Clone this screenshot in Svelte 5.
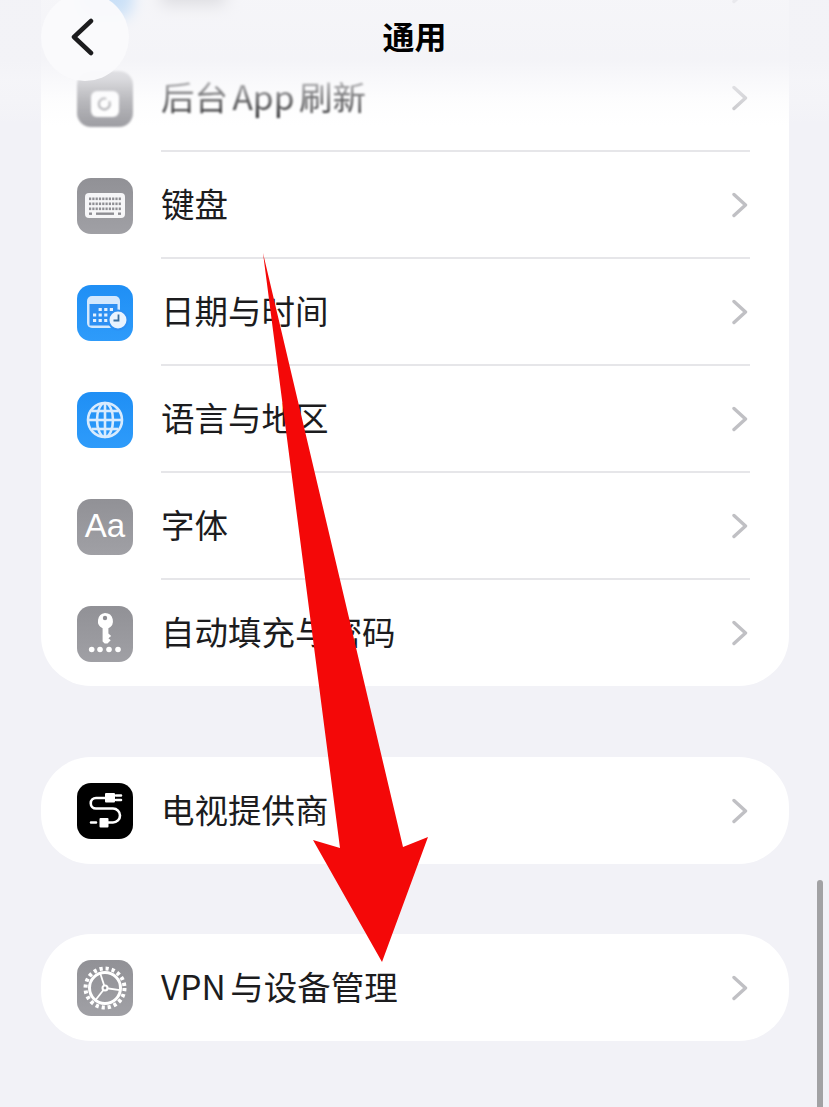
<script>
  const main_rows = [
    { icon: 'hidden', label: '', smear: true },
    { icon: 'refresh', label: '后台 App 刷新' },
    { icon: 'keyboard', label: '键盘' },
    { icon: 'calendar', label: '日期与时间' },
    { icon: 'globe', label: '语言与地区' },
    { icon: 'font', label: '字体' },
    { icon: 'key', label: '自动填充与密码' }
  ]
  const blue_icons = ['calendar', 'globe', 'hidden']
  const tones = { tv: 'dark' }
  const tone = (name) => (blue_icons.includes(name) ? 'blue' : tones[name] ?? 'gray')
  const keyboard_dots = [0, 1, 2, 3, 4, 5, 6, 7, 8, 9]
  const calendar_dots = [0, 1, 2, 3]
  const globe_lats = [-9, 0, 9]
  const gear_spokes = [-108, 8, 128]
  const key_dots = [14.7, 23, 32, 41]
</script>

{#snippet glyph(name)}
  <svg viewBox="0 0 56 56" class="glyph">
    {#if name === 'refresh'}
      <rect x="14" y="20" width="28" height="26" rx="6" fill="#fff" />
      <path d="M32.500 31a5.500 5.500 0 1 1-4-3.500" fill="none" stroke="#a2a2a6" stroke-width="2.200" stroke-linecap="round" />
    {:else if name === 'keyboard'}
      <rect x="8" y="15" width="40" height="25" rx="4" fill="#f6f6f8" />
      {#each [19.5, 24.5, 29.5] as y}
        {#each keyboard_dots as i}
          <rect x={12 + i * 3.3} {y} width="2.200" height="2.600" fill="#8e8e93" />
        {/each}
      {/each}
      <rect x="19" y="34.500" width="18" height="2.400" fill="#8e8e93" />
      <rect x="12" y="34.500" width="3" height="2.400" fill="#8e8e93" />
      <rect x="41" y="34.500" width="3" height="2.400" fill="#8e8e93" />
    {:else if name === 'calendar'}
      <rect x="10" y="11" width="33" height="32" rx="5" fill="#d3e8fd" />
      <rect x="12.500" y="19" width="28" height="21.500" fill="#2d8ff2" />
      {#each [23, 28.500, 34] as y, r}
        {#each calendar_dots as i}
          {#if !(r === 0 && i === 0)}
            <rect x={16 + i * 5.6} {y} width="3.200" height="3" fill="#e4f1fe" />
          {/if}
        {/each}
      {/each}
      <circle cx="41" cy="35" r="9.500" fill="#e9f3fe" stroke="#2d8ff2" stroke-width="2" />
      <path d="M41.500 29.500v6h-5" fill="none" stroke="#3a6f9f" stroke-width="1.800" />
    {:else if name === 'globe'}
      <g fill="none" stroke="#d8ebfe" stroke-width="2.600">
        <circle cx="28" cy="28" r="17" />
        <ellipse cx="28" cy="28" rx="8" ry="17" />
        <path d="M28 11v34" />
        {#each globe_lats as d}
          <path d="M{12 + Math.abs(d) / 3} {28 + d}H{44 - Math.abs(d) / 3}" />
        {/each}
      </g>
    {:else if name === 'font'}
      <text x="28" y="38" text-anchor="middle" class="aa">Aa</text>
    {:else if name === 'key'}
      <path d="M28 7a8 8 0 0 1 3.400 15.200v5.300l2.800 2.500-2.800 2.300 2.300 2-3.200 3.200h-2.800l-2.100-2.100V22.200A8 8 0 0 1 28 7z" fill="#fff" />
      <circle cx="28" cy="12" r="2.200" fill="#8e8e93" />
      {#each key_dots as cx}
        <circle {cx} cy="43.500" r="2.800" fill="#fff" />
      {/each}
    {:else if name === 'tv'}
      <g fill="none" stroke="#fff" stroke-width="2.600" stroke-linecap="round">
        <path d="M28 15H19a5.200 5.200 0 0 0 0 10.500H36a7 7 0 0 1 0 14H31" />
        <path d="M39 12.500h5M39 17h5M14 39.500h5" />
      </g>
      <rect x="28" y="10" width="10" height="9.500" rx="1" fill="#fff" />
      <rect x="22.500" y="35" width="9" height="9.500" rx="1" fill="#fff" />
    {:else if name === 'gear'}
      <g fill="none" stroke="#fff">
        <circle cx="28" cy="28" r="19.500" stroke-width="4" stroke-dasharray="3.200 2.926" />
        <circle cx="28" cy="28" r="15.500" stroke-width="3" />
        {#each gear_spokes as a}
          <path d="M28 28L{28 + 15 * Math.cos((a * Math.PI) / 180)} {28 + 15 * Math.sin((a * Math.PI) / 180)}" stroke-width="1.800" />
        {/each}
      </g>
      <circle cx="28" cy="28" r="3.500" fill="#fff" />
      <circle cx="28" cy="28" r="1.400" fill="#8e8e93" />
    {/if}
  </svg>
{/snippet}

{#snippet row(item)}
  <div class="row">
    <span class="icon {tone(item.icon)}">{@render glyph(item.icon)}</span>
    <div class="row-body">
      {#if item.smear}
        <span class="smear"></span>
      {:else}
        <span class="label">{item.label}</span>
      {/if}
      <svg class="chevron" viewBox="0 0 16 26">
        <path d="M2 2.500L13.500 13 2 23.500" />
      </svg>
    </div>
  </div>
{/snippet}

<div class="page">
  <section class="card first">
    {#each main_rows as item}
      {@render row(item)}
    {/each}
  </section>
  <section class="card second">
    {@render row({ icon: 'tv', label: '电视提供商' })}
  </section>
  <section class="card third">
    {@render row({ icon: 'gear', label: 'VPN 与设备管理' })}
  </section>

  <header class="nav">
    <div class="nav-tint"></div>
    <button class="back" aria-label="返回">
      <svg viewBox="0 0 24 38" width="24" height="38">
        <path d="M21 3L4 19l17 16" />
      </svg>
    </button>
    <h1>通用</h1>
  </header>

  <div class="scrollbar"></div>

  <svg class="arrow" viewBox="0 0 829 1107">
    <polygon points="263,253 403,847 428,837 382,962 313,840 340,848" />
  </svg>
</div>

<style>
  :global(body) {
    margin: 0;
    background: #f2f2f7;
  }
  .page {
    position: relative;
    width: 829px;
    height: 1107px;
    overflow: hidden;
    background: #f2f2f7;
    padding: 0 40px 0 41px;
    box-sizing: border-box;
    font-family: 'Noto Sans CJK SC', 'Noto Sans', sans-serif;
    color: #1c1c1e;
  }
  .card {
    background: #fff;
    border-radius: 50px;
    overflow: hidden;
  }
  .card.first {
    margin-top: -63px;
  }
  .card.second {
    margin-top: 71px;
  }
  .card.third {
    margin-top: 70px;
  }
  .row {
    display: flex;
    align-items: center;
    height: 107px;
    padding: 0 39px 0 36px;
  }
  /* rows sliding under the nav bar go soft */
  .first .row:nth-child(1) .icon {
    filter: blur(7px);
  }
  .first .row:nth-child(2) .icon,
  .first .row:nth-child(2) .label {
    filter: blur(0.8px);
  }
  .first .row:nth-child(2) .row-body {
    border-top-color: transparent;
  }
  .icon {
    flex: none;
    width: 56px;
    height: 56px;
    border-radius: 14px;
    margin: 1px 28px 0 0;
  }
  .first .icon {
    margin-top: 3px;
  }
  .icon.gray {
    background: linear-gradient(#919196, #a0a0a5);
  }
  .icon.blue {
    background: linear-gradient(#1f8ff5, #2e9bfa);
  }
  .icon.dark {
    background: #000;
  }
  .glyph {
    display: block;
    width: 56px;
    height: 56px;
  }
  .aa {
    fill: #fff;
    font: 400 33px 'Liberation Sans', sans-serif;
  }
  .row-body {
    flex: 1;
    align-self: stretch;
    display: flex;
    align-items: center;
    justify-content: space-between;
    padding: 0 2px 2px 0;
    border-top: 2px solid #e6e6e9;
    margin: -1px 0;
  }
  .row:first-child .row-body {
    border-top-color: transparent;
  }
  .label {
    font-size: 33.500px;
    line-height: 1;
    word-spacing: -3px;
    margin-bottom: 3px;
  }
  .smear {
    width: 64px;
    height: 30px;
    background: #8a8a8e;
    filter: blur(8px);
  }
  .chevron {
    width: 16px;
    height: 26px;
    fill: none;
    stroke: #c0c0c4;
    stroke-width: 3.400;
    stroke-linecap: round;
    stroke-linejoin: round;
  }
  .nav {
    position: absolute;
    inset: 0 0 auto 0;
    height: 130px;
  }
  .nav-tint {
    position: absolute;
    inset: 0;
    background: linear-gradient(
      rgba(243, 243, 247, 0.8) 0,
      rgba(243, 243, 247, 0.92) 60px,
      rgba(246, 246, 249, 0.7) 80px,
      rgba(248, 248, 250, 0.35) 100px,
      rgba(255, 255, 255, 0) 125px
    );
  }
  .back {
    position: absolute;
    left: 41px;
    top: -7px;
    width: 88px;
    height: 88px;
    padding: 0;
    border: 0;
    border-radius: 50%;
    background: rgba(250, 250, 252, 0.96);
    display: flex;
    align-items: center;
    justify-content: center;
  }
  .back svg {
    margin-right: 7px;
    fill: none;
    stroke: #1c1c1e;
    stroke-width: 4.500;
    stroke-linecap: round;
    stroke-linejoin: round;
  }
  h1 {
    position: absolute;
    left: 0;
    right: 0;
    top: 15px;
    margin: 0;
    text-align: center;
    font-size: 32px;
    line-height: 40px;
    font-weight: 700;
    color: #000;
  }
  .scrollbar {
    position: absolute;
    left: 817px;
    top: 880px;
    bottom: 0;
    width: 6px;
    border-radius: 3px 3px 0 0;
    background: #a2a2a4;
  }
  .arrow {
    position: absolute;
    inset: 0;
    width: 829px;
    height: 1107px;
    pointer-events: none;
  }
  .arrow polygon {
    fill: #f40808;
  }
</style>
